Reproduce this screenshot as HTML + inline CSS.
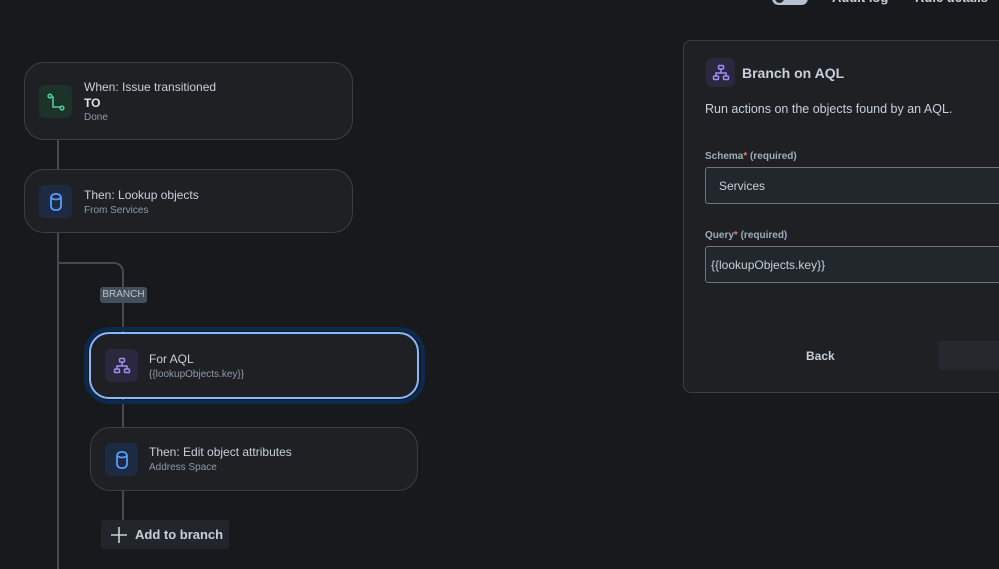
<!DOCTYPE html>
<html><head><meta charset="utf-8"><style>
*{box-sizing:border-box;margin:0;padding:0}
body{width:999px;height:564px;background:#17191c;font-family:"Liberation Sans",sans-serif;position:relative;overflow:hidden;color:#c7d1db}
.abs{position:absolute}
.card{position:absolute;background:#1e2024;border:1px solid #3b3f45;border-radius:20px}
.icon{position:absolute;width:33px;height:33px;border-radius:6px;display:flex;align-items:center;justify-content:center}
.t{position:absolute;font-size:12px;color:#c7d1db;white-space:nowrap}
.s{position:absolute;font-size:10px;color:#8c9bab;white-space:nowrap}
.line{position:absolute;background:#454a51}
</style></head><body>
<div class="abs" style="left:772px;top:-8px;width:36px;height:13px;border-radius:7px;background:#b6c2cf"></div>
<div class="abs" style="left:775px;top:-6px;width:9px;height:9px;border-radius:5px;background:#22272b"></div>
<div class="t" style="left:832px;top:-10px;font-weight:bold;font-size:13px">Audit log</div>
<div class="t" style="left:915px;top:-10px;font-weight:bold;font-size:13px">Rule details</div>

<div class="line" style="left:57px;top:139px;width:2px;height:430px"></div>
<div class="abs" style="left:58px;top:262px;width:66px;height:26px;border-top:2px solid #454a51;border-right:2px solid #454a51;border-top-right-radius:10px"></div>
<div class="line" style="left:122px;top:300px;width:2px;height:34px"></div>
<div class="line" style="left:122px;top:397px;width:2px;height:31px"></div>
<div class="line" style="left:122px;top:490px;width:2px;height:31px"></div>
<div class="abs" style="left:100px;top:287px;width:47px;height:16px;background:#454f59;border-radius:3px;font-size:10px;color:#b6c2cf;text-align:center;line-height:16px">BRANCH</div>

<div class="card" style="left:24px;top:62px;width:329px;height:78px"></div>
<div class="icon" style="left:39px;top:85px;background:#1c3329"><svg width="20" height="20" viewBox="0 0 20 20" fill="none" stroke="#4bce97" stroke-width="1.6"><circle cx="4" cy="4" r="1.8"/><circle cx="16" cy="16" r="1.8"/><path d="M5.5 5 L7 5 L7 15 L14 15"/></svg></div>
<div class="t" style="left:84px;top:80px">When: Issue transitioned</div>
<div class="t" style="left:84px;top:96px;font-weight:bold;color:#dee4ea">TO</div>
<div class="s" style="left:84px;top:112px">Done</div>

<div class="card" style="left:24px;top:169px;width:329px;height:64px"></div>
<div class="icon" style="left:39px;top:185px;background:#1c2b42"><svg width="14" height="20" viewBox="0 0 14 20" fill="none" stroke="#579dff" stroke-width="1.8"><rect x="2" y="2" width="10" height="16" rx="4"/><path d="M2 6 Q7 9 12 6"/></svg></div>
<div class="t" style="left:84px;top:188px">Then: Lookup objects</div>
<div class="s" style="left:84px;top:205px">From Services</div>

<div class="abs" style="left:84px;top:327px;width:341px;height:77px;border-radius:26px;border:4px solid #0c2a4d"></div>
<div class="card" style="left:89px;top:332px;width:330px;height:67px;border:2px solid #85b8ff"></div>
<div class="icon" style="left:105px;top:349px;background:#2b273f"><svg width="18" height="18" viewBox="0 0 18 18" fill="none" stroke="#9f8fef" stroke-width="1.5"><rect x="6.5" y="1.5" width="5" height="3.5" rx="1"/><rect x="1.5" y="12" width="5" height="3.5" rx="1"/><rect x="11.5" y="12" width="5" height="3.5" rx="1"/><path d="M9 5V9M4 12V9H14V12"/></svg></div>
<div class="t" style="left:149px;top:352px">For AQL</div>
<div class="s" style="left:149px;top:369px">{{lookupObjects.key}}</div>

<div class="card" style="left:90px;top:427px;width:328px;height:64px"></div>
<div class="icon" style="left:105px;top:443px;background:#1c2b42"><svg width="14" height="20" viewBox="0 0 14 20" fill="none" stroke="#579dff" stroke-width="1.8"><rect x="2" y="2" width="10" height="16" rx="4"/><path d="M2 6 Q7 9 12 6"/></svg></div>
<div class="t" style="left:149px;top:445px">Then: Edit object attributes</div>
<div class="s" style="left:149px;top:462px">Address Space</div>

<div class="abs" style="left:101px;top:520px;width:128px;height:29px;background:#22262a;border-radius:3px"></div>
<svg class="abs" style="left:110px;top:526px" width="18" height="18" viewBox="0 0 18 18" stroke="#c7d1db" stroke-width="1.6"><path d="M9 1V17M1 9H17"/></svg>
<div class="t" style="left:135px;top:527px;font-size:13px;font-weight:bold">Add to branch</div>

<div class="abs" style="left:683px;top:40px;width:330px;height:353px;background:#1e2024;border:1px solid #3b3f45;border-radius:8px"></div>
<div class="icon" style="left:706px;top:58px;width:29px;height:29px;background:#2b273f"><svg width="18" height="18" viewBox="0 0 18 18" fill="none" stroke="#9f8fef" stroke-width="1.5"><rect x="6.5" y="1.5" width="5" height="3.5" rx="1"/><rect x="1.5" y="12" width="5" height="3.5" rx="1"/><rect x="11.5" y="12" width="5" height="3.5" rx="1"/><path d="M9 5V9M4 12V9H14V12"/></svg></div>
<div class="t" style="left:742px;top:65px;font-size:14px;font-weight:bold;color:#c7d1db">Branch on AQL</div>
<div class="t" style="left:705px;top:102px;font-size:12.5px">Run actions on the objects found by an AQL.</div>
<div class="s" style="left:705px;top:151px;font-weight:bold;color:#9fadbc">Schema<span style="color:#f87168">*</span> <span>(required)</span></div>
<div class="abs" style="left:705px;top:167px;width:300px;height:37px;background:#22272b;border:1px solid #6b7480;border-radius:3px"></div>
<div class="t" style="left:719px;top:179px">Services</div>
<div class="s" style="left:705px;top:230px;font-weight:bold;color:#9fadbc">Query<span style="color:#f87168">*</span> <span>(required)</span></div>
<div class="abs" style="left:705px;top:246px;width:300px;height:37px;background:#22272b;border:1px solid #6b7480;border-radius:3px"></div>
<div class="t" style="left:711px;top:258px">{{lookupObjects.key}}</div>
<div class="t" style="left:806px;top:349px;font-weight:bold">Back</div>
<div class="abs" style="left:938px;top:341px;width:70px;height:29px;background:#25292e;border-radius:3px"></div>
</body></html>
